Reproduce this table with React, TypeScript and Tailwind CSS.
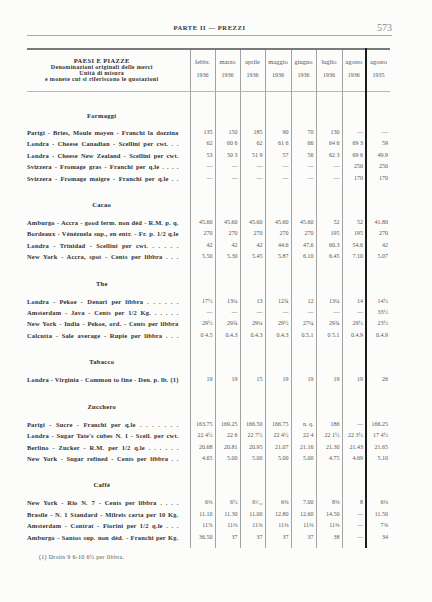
import clsx from "clsx";

type Row = [string, string[]];
type Section = { name: string; rows: Row[] };

const months = [
  ["febbr.", "1936"],
  ["marzo", "1936"],
  ["aprile", "1936"],
  ["maggio", "1936"],
  ["giugno", "1936"],
  ["luglio", "1936"],
  ["agosto", "1936"],
  ["agosto", "1935"],
];

const sections: Section[] = [
  {
    name: "Formaggi",
    rows: [
      ["Parigi - Bries, Moule moyen - Franchi la dozzina", ["135", "150", "185", "90", "70", "130", "—", "—"]],
      ["Londra - Cheese Canadian - Scellini per cwt. . .", ["62", "60 6", "62", "61 6", "66", "64 6", "69 3", "59"]],
      ["Londra - Cheese New Zealand - Scellini per cwt.", ["53", "50 3", "51 9", "57", "56", "62 3", "69 6", "49.9"]],
      ["Svizzera - Fromage gras - Franchi per q.le . . . .", ["—", "—", "—", "—", "—", "—", "250", "250"]],
      ["Svizzera - Fromage maigre - Franchi per q.le . .", ["—", "—", "—", "—", "—", "—", "170", "170"]],
    ],
  },
  {
    name: "Cacao",
    rows: [
      ["Amburgo - Accra - good ferm. non déd - R.M. p. q.", ["45.60", "45.60", "45.60", "45.60", "45.60", "52", "52", "41.80"]],
      ["Bordeaux - Vénézuela sup., en entr. - Fr. p. 1/2 q.le", ["270", "270", "270", "270", "270", "195", "195", "270"]],
      ["Londra - Trinidad - Scellini per cwt. . . . . .", ["42", "42", "42", "44.6", "47.6", "60.3", "54.6", "42"]],
      ["New York - Accra, spot - Cents per libbra . . .", ["5.50", "5.30", "5.45", "5.87", "6.10", "6.45", "7.10", "5.07"]],
    ],
  },
  {
    name: "The",
    rows: [
      ["Londra - Pekoe - Denari per libbra . . . . . .", ["17½", "13¼", "13", "12¾", "12", "13¼", "14", "14½"]],
      ["Amsterdam - Java - Cents per 1/2 Kg. . . . . .", ["—", "—", "—", "—", "—", "—", "—", "33½"]],
      ["New York - India - Pekoe, ord. - Cents per libbra", ["29½", "29¾", "29¼", "29½", "27¼", "29¾", "29½", "23½"]],
      ["Calcutta - Sale average - Rupie per libbra . . .", ["0 4.5", "0.4.3", "0.4.3", "0.4.3", "0.5.1", "0 5.1", "0.4.9", "0.4.9"]],
    ],
  },
  {
    name: "Tabacco",
    rows: [["Londra - Virginia - Common to fine - Den. p. lb. (1)", ["19", "19", "15", "19", "19", "19", "19", "26"]]],
  },
  {
    name: "Zucchero",
    rows: [
      ["Parigi - Sucre - Franchi per q.le . . . . . . .", ["163.75", "169.25", "166.50", "166.75", "n. q.", "186", "—", "166.25"]],
      ["Londra - Sugar Tate's cubes N. 1 - Scell. per cwt.", ["22 4½", "22 6", "22 7½", "22 4½", "22 4", "22 1½", "22 3½", "17 4½"]],
      ["Berlino - Zucker - R.M. per 1/2 q.le . . . . . .", ["20.68", "20.81", "20.95", "21.07", "21.16", "21.30", "21.43", "21.65"]],
      ["New York - Sugar refined - Cents per libbra . .", ["4.65", "5.00", "5.00", "5.00", "5.00", "4.75", "4.69", "5.10"]],
    ],
  },
  {
    name: "Caffè",
    rows: [
      ["New York - Rio N. 7 - Cents per libbra . . . .", ["6⅜", "6½", "6⁵⁄₁₆", "6⅜", "7.00", "8⅜", "8", "6⅛"]],
      ["Brasile - N. 1 Standard - Milreis carta per 10 Kg.", ["11.10", "11.30", "11.00", "12.80", "12.60", "14.50", "—", "11.50"]],
      ["Amsterdam - Contrat - Fiorini per 1/2 q.le . . .", ["11⅞", "11⅜", "11⅝", "11⅜", "11⅜", "11⅜", "—", "7⅝"]],
      ["Amburgo - Santos sup. non déd. - Franchi per Kg.", ["36.50", "37", "37", "37", "37", "38", "—", "34"]],
    ],
  },
];

const colWidths = ["w-[25px]", "w-[25px]", "w-[25px]", "w-[26px]", "w-[25px]", "w-[26px]", "w-[24px]", "w-[24px]"];

function lineClass(i: number) {
  return i === 7 ? "border-l-2 border-l-[#1c1c1c]" : "border-l border-l-[#a3a3a3]";
}

function EmptyCells() {
  return (
    <>
      {months.map((_, i) => (
        <td key={i} className={lineClass(i)} />
      ))}
    </>
  );
}

export default function App() {
  return (
    <div className="h-[602px] w-[432px] overflow-hidden bg-[#fcfcfb] font-['Liberation_Serif',serif] text-[#2e2e2e]">
      {/* running head */}
      <div className="ml-[27px] w-[365px] border-b border-[#a8a8a8] pb-[2px] pt-[23px]">
        <div className="grid h-[10px] grid-cols-[1fr_auto_1fr] items-center">
          <span />
          <span className="text-[6.5px] font-bold tracking-[0.6px] text-[#333]">PARTE II — PREZZI</span>
          <span className="text-right text-[10px] leading-[10px] text-[#8a8a8a]">573</span>
        </div>
      </div>

      <table className="ml-[27px] mt-[12px] w-[363px] table-fixed border-collapse border-t-2 border-t-[#7a7a7a]">
        <colgroup>
          <col className="w-[163px]" />
          {colWidths.map((w, i) => (
            <col key={i} className={w} />
          ))}
        </colgroup>
        <thead>
          <tr className="h-[42px] border-b border-b-[#b5b5b5]">
            <th className="pr-[13px] text-center align-top font-normal">
              <div className="pt-[8px] text-[6.5px] font-bold leading-[6px] tracking-[0.4px] text-[#2a2a2a]">PAESI E PIAZZE</div>
              <div className="text-[6px] font-bold leading-[6px] tracking-[0.3px] text-[#333]">
                <div>Denominazioni originali delle merci</div>
                <div>Unità di misura</div>
                <div>e monete cui si riferiscono le quotazioni</div>
              </div>
            </th>
            {months.map(([m, y], i) => (
              <th key={i} className={clsx("text-center align-top font-normal text-[#555]", lineClass(i))}>
                <div className="pt-[8px] text-[6.5px] leading-[8px]">{m}</div>
                <div className="pt-[5px] text-[6px] leading-[8px]">{y}</div>
              </th>
            ))}
          </tr>
        </thead>
        <tbody>
          {sections.map((s, si) => (
            <SectionRows key={s.name} section={s} first={si === 0} />
          ))}
          <tr className="h-[5px]">
            <td />
            <EmptyCells />
          </tr>
        </tbody>
      </table>

      <p className="ml-[39px] mt-[5px] text-[6px] leading-[8px] tracking-[0.3px] text-[#555]">
        (1) Droits 9 6-10 6½ per libbra.
      </p>
    </div>
  );
}

function SectionRows({ section, first }: { section: Section; first: boolean }) {
  return (
    <>
      <tr className={first ? "h-[36px]" : "h-[33px]"}>
        <td
          className={clsx(
            "pr-[13px] text-center align-top text-[6.5px] font-bold leading-[11.4px] tracking-[0.3px] text-[#2a2a2a]",
            first ? "pt-[18px]" : "pt-[15px]"
          )}
        >
          {section.name}
        </td>
        <EmptyCells />
      </tr>
      {section.rows.map(([label, vals]) => (
        <tr key={label} className="h-[11.4px]">
          <td className="whitespace-nowrap pr-[11px] text-justify text-[6.5px] font-bold leading-[11.4px] tracking-[0.15px] text-[#333] [text-align-last:justify]">
            {label}
          </td>
          {vals.map((v, i) => (
            <td
              key={i}
              className={clsx(
                "whitespace-nowrap pr-[2px] text-right text-[6px] leading-[11.4px] text-[#555]",
                v === "—" && "pr-0 text-center",
                lineClass(i)
              )}
            >
              {v}
            </td>
          ))}
        </tr>
      ))}
    </>
  );
}
